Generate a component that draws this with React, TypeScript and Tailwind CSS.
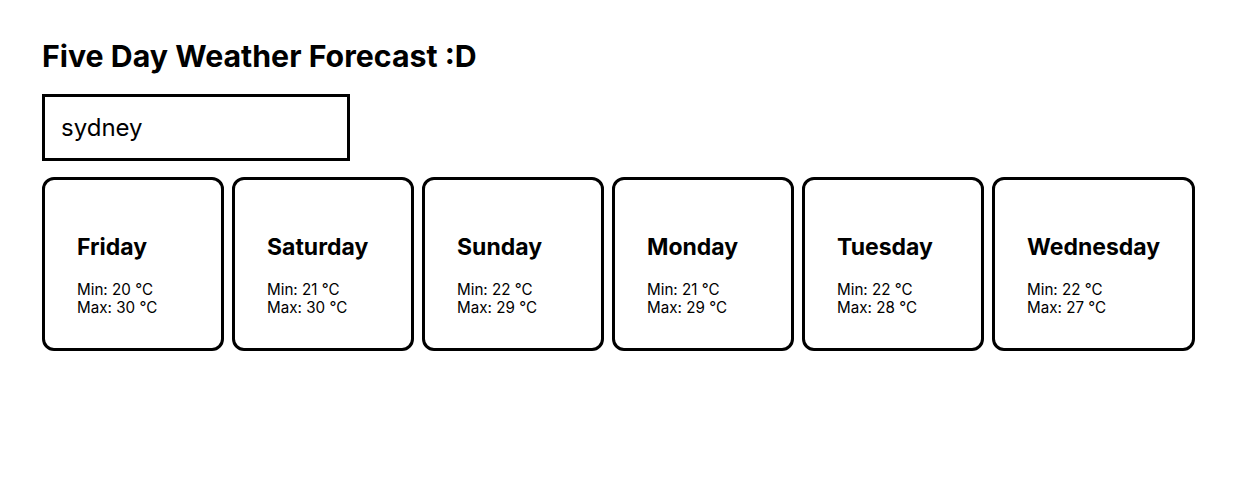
const days = [
  { day: "Friday", min: 20, max: 30 },
  { day: "Saturday", min: 21, max: 30 },
  { day: "Sunday", min: 22, max: 29 },
  { day: "Monday", min: 21, max: 29 },
  { day: "Tuesday", min: 22, max: 28 },
  { day: "Wednesday", min: 22, max: 27 },
];

export default function App() {
  return (
    <div className="min-h-screen bg-white px-[42px] pt-[36px] text-black font-['Inter',sans-serif]">
      <h1 className="text-[30.3px] leading-[40px] font-bold">Five Day Weather Forecast :D</h1>
      <input
        defaultValue="sydney"
        className="mt-[18px] block w-[308px] h-[67px] border-[3px] border-black px-[16px] text-[24px] outline-none"
      />
      <div className="mt-[16px] flex gap-[8px]">
        {days.map((d) => (
          <div
            key={d.day}
            className="min-w-[182px] h-[174px] border-[3px] border-black rounded-[12px] pt-[54px] px-[32px]"
          >
            <h2 className="text-[23px] leading-[27px] font-bold">{d.day}</h2>
            <p className="mt-[20px] text-[15.2px] leading-[18px]">Min: {d.min} °C</p>
            <p className="text-[15.2px] leading-[18px]">Max: {d.max} °C</p>
          </div>
        ))}
      </div>
    </div>
  );
}
